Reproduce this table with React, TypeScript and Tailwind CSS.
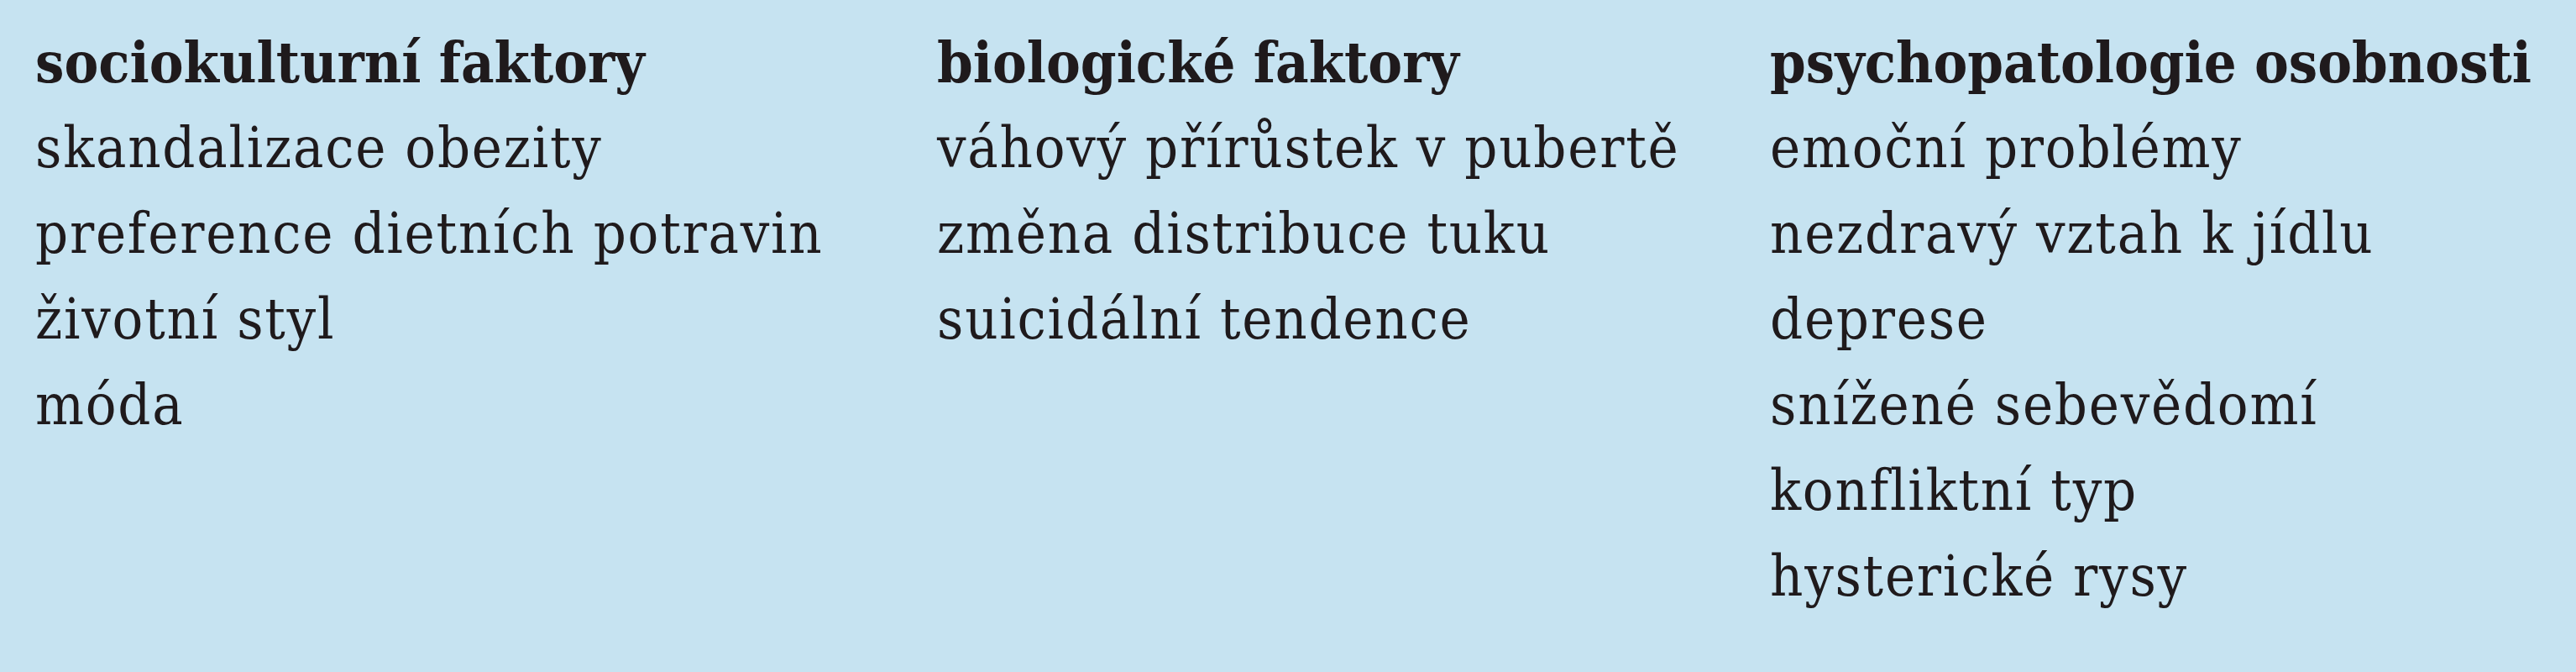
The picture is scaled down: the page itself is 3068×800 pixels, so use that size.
const columns = [
  {
    title: "sociokulturní faktory",
    items: ["skandalizace obezity", "preference dietních potravin", "životní styl", "móda"],
  },
  {
    title: "biologické faktory",
    items: ["váhový přírůstek v pubertě", "změna distribuce tuku", "suicidální tendence"],
  },
  {
    title: "psychopatologie osobnosti",
    items: [
      "emoční problémy",
      "nezdravý vztah k jídlu",
      "deprese",
      "snížené sebevědomí",
      "konfliktní typ",
      "hysterické rysy",
    ],
  },
];

export default function App() {
  return (
    <div className="h-[800px] w-full bg-[#c6e3f1] text-[#1f1a1c] font-['DejaVu_Serif',serif] [font-stretch:condensed]">
      <div className="grid grid-cols-[1074px_992px_1fr] pl-[42px] pt-[23px]">
        {columns.map((col) => (
          <div key={col.title} className="flex flex-col">
            <h3 className="text-[68px] leading-[102px] font-bold">{col.title}</h3>
            <ul className="flex flex-col">
              {col.items.map((item) => (
                <li key={item} className="text-[68px] leading-[102px] font-light tracking-[1.75px]">
                  {item}
                </li>
              ))}
            </ul>
          </div>
        ))}
      </div>
    </div>
  );
}
